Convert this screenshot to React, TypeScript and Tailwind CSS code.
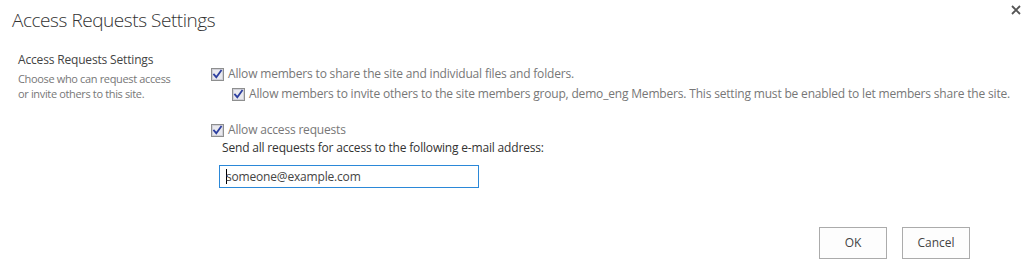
import React from "react";

function Check() {
  return (
    <svg width="13" height="13" viewBox="0 0 13 13" className="shrink-0">
      <rect x="0.5" y="0.5" width="12" height="12" fill="#f4f4f4" stroke="#8e8f8f" />
      <rect x="1.5" y="1.5" width="10" height="10" fill="#e9e9ee" stroke="#d0d0d8" />
      <path d="M3 6.5 L5.3 9.2 L10 2.8" fill="none" stroke="#2d3fa0" strokeWidth="1.8" strokeLinecap="square" />
    </svg>
  );
}

export default function App() {
  return (
    <div className="w-[1031px] h-[267px] bg-white relative text-[#444]" style={{ fontFamily: '"Open Sans", "Noto Sans", sans-serif' }}>
      <div className="pl-[12px] pt-[6px] text-[19px] font-light tracking-[-0.45px] text-[#333] leading-[28px]">Access Requests Settings</div>
      <button className="absolute right-[10px] top-[5px] w-[10px] h-[10px]">
        <svg width="10" height="10" viewBox="0 0 10 10" className="block">
          <path d="M1 1 L9 9 M9 1 L1 9" stroke="#555" strokeWidth="1.8" />
        </svg>
      </button>
      <div className="flex mt-[18px]">
        <div className="w-[193px] pl-[18px] shrink-0">
          <div className="text-[12px] tracking-[-0.17px] text-[#444] leading-[16px]">Access Requests Settings</div>
          <div className="mt-[3px] text-[11px] tracking-[-0.35px] text-[#777] leading-[15px]">
            Choose who can request access<br />or invite others to this site.
          </div>
        </div>
        <div className="flex flex-col pl-[18px] pt-[14px] text-[12px] tracking-[-0.18px] leading-[16px]">
          <label className="flex items-center gap-[4px] text-[#777]">
            <Check />
            <span className="whitespace-nowrap">Allow members to share the site and individual files and folders.</span>
          </label>
          <label className="flex items-center gap-[4px] text-[#777] ml-[21px] mt-[4px]">
            <Check />
            <span className="whitespace-nowrap">Allow members to invite others to the site members group, demo_eng Members. This setting must be enabled to let members share the site.</span>
          </label>
          <label className="flex items-center gap-[4px] text-[#777] mt-[20px]">
            <Check />
            <span>Allow access requests</span>
          </label>
          <div className="ml-[11px] mt-[2px] text-[#333]">Send all requests for access to the following e-mail address:</div>
          <div className="ml-[8px] mt-[9px] w-[260px] h-[23px] border border-[#2b88d8] flex items-center pl-[6px] text-[#444]">
            <span className="w-px h-[15px] bg-black -mr-px"></span>
            <span>someone@example.com</span>
          </div>
        </div>
      </div>
      <div className="flex justify-end gap-[15px] pr-[61px] mt-[39px]">
        <button className="w-[68px] h-[32px] border border-[#ababab] bg-[#fdfdfd] text-[12px] text-[#444]">OK</button>
        <button className="w-[68px] h-[32px] border border-[#ababab] bg-[#fdfdfd] text-[12px] text-[#444]">Cancel</button>
      </div>
    </div>
  );
}
